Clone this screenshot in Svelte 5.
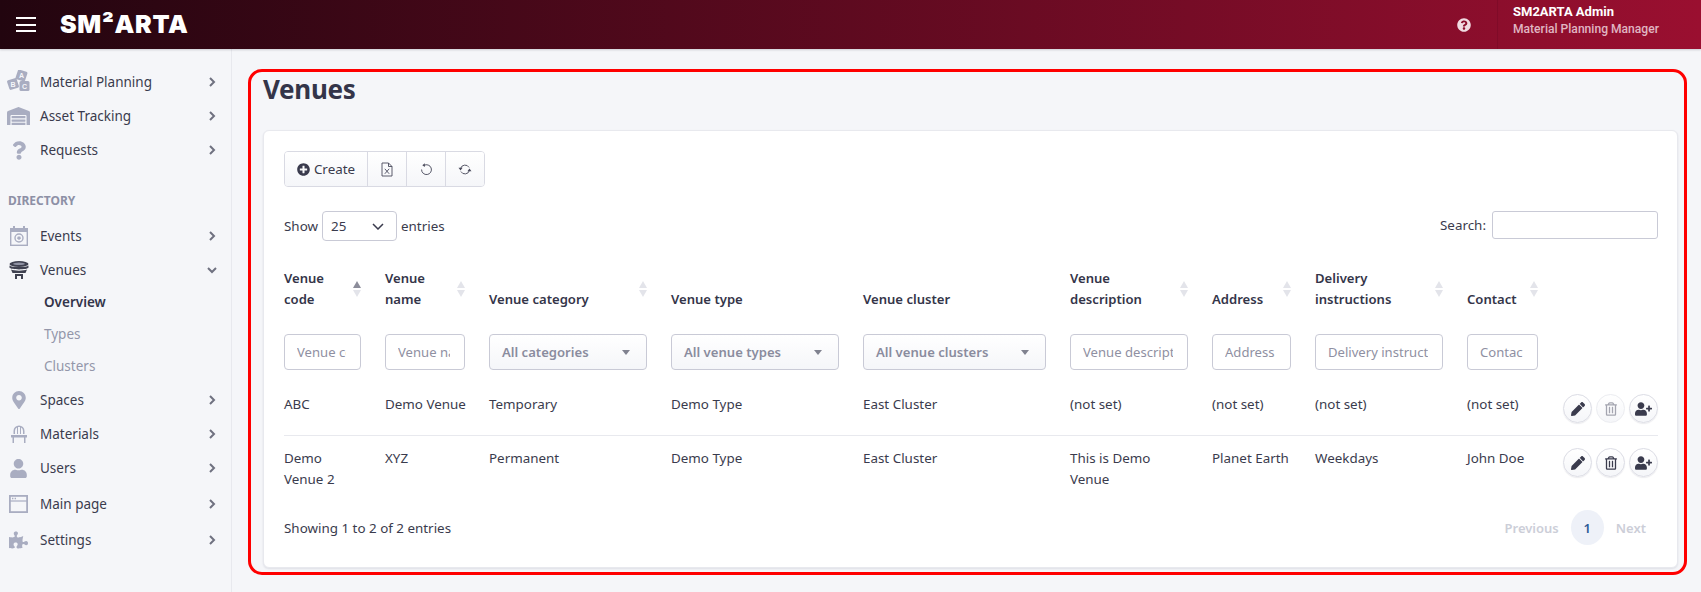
<script>
  const P = {
    plus: 'M256 8C119 8 8 119 8 256s111 248 248 248 248-111 248-248S393 8 256 8zm144 276c0 6.6-5.4 12-12 12h-92v92c0 6.6-5.4 12-12 12h-56c-6.6 0-12-5.4-12-12v-92h-92c-6.6 0-12-5.4-12-12v-56c0-6.6 5.4-12 12-12h92v-92c0-6.6 5.4-12 12-12h56c6.6 0 12 5.4 12 12v92h92c6.6 0 12 5.4 12 12v56z',
    help: 'M504 256c0 136.997-111.043 248-248 248S8 392.997 8 256C8 119.083 119.043 8 256 8s248 111.083 248 248zM262.655 90c-54.497 0-89.255 22.957-116.549 63.758-3.536 5.286-2.353 12.415 2.715 16.258l34.699 26.31c5.205 3.947 12.621 3.008 16.665-2.122 17.864-22.658 30.113-35.797 57.303-35.797 20.429 0 45.698 13.148 45.698 32.958 0 14.976-12.363 22.667-32.534 33.976C247.128 238.528 216 254.941 216 296v4c0 6.627 5.373 12 12 12h56c6.627 0 12-5.373 12-12v-1.333c0-28.462 83.186-29.647 83.186-106.667 0-58.002-60.165-102-116.531-102zM256 338c-25.365 0-46 20.635-46 46 0 25.364 20.635 46 46 46s46-20.636 46-46c0-25.365-20.635-46-46-46z',
    pencil: 'M497.9 142.1l-46.1 46.1c-4.7 4.7-12.3 4.7-17 0l-111-111c-4.7-4.7-4.7-12.3 0-17l46.1-46.1c18.7-18.7 49.1-18.7 67.9 0l60.1 60.1c18.8 18.7 18.8 49.1 0 67.9zM284.2 99.8L21.6 362.4.4 483.9c-2.9 16.4 11.4 30.6 27.8 27.8l121.5-21.3 262.6-262.6c4.7-4.7 4.7-12.3 0-17l-111-111c-4.8-4.7-12.4-4.7-17.1 0z',
    trash: 'M268 416h24a12 12 0 0 0 12-12V188a12 12 0 0 0-12-12h-24a12 12 0 0 0-12 12v216a12 12 0 0 0 12 12zM432 80h-82.41l-34-56.7A48 48 0 0 0 274.41 0H173.59a48 48 0 0 0-41.16 23.3L98.41 80H16A16 16 0 0 0 0 96v16a16 16 0 0 0 16 16h16v336a48 48 0 0 0 48 48h288a48 48 0 0 0 48-48V128h16a16 16 0 0 0 16-16V96a16 16 0 0 0-16-16zM171.84 50.91A6 6 0 0 1 177 48h94a6 6 0 0 1 5.15 2.91L293.61 80H154.39zM368 464H80V128h288zm-212-48h24a12 12 0 0 0 12-12V188a12 12 0 0 0-12-12h-24a12 12 0 0 0-12 12v216a12 12 0 0 0 12 12z',
    userplus: 'M624 208h-64v-64c0-8.8-7.2-16-16-16h-32c-8.8 0-16 7.2-16 16v64h-64c-8.8 0-16 7.2-16 16v32c0 8.8 7.2 16 16 16h64v64c0 8.8 7.2 16 16 16h32c8.8 0 16-7.2 16-16v-64h64c8.8 0 16-7.2 16-16v-32c0-8.8-7.2-16-16-16zm-400 48c70.7 0 128-57.3 128-128S294.7 0 224 0 96 57.3 96 128s57.3 128 128 128zm89.6 32h-16.7c-22.2 10.2-46.9 16-72.9 16s-50.6-5.8-72.9-16h-16.7C60.2 288 0 348.2 0 422.4V464c0 26.5 21.5 48 48 48h352c26.5 0 48-21.5 48-48v-41.6c0-74.2-60.2-134.4-134.4-134.4z',
    user: 'M224 256c70.7 0 128-57.3 128-128S294.7 0 224 0 96 57.3 96 128s57.3 128 128 128zm89.6 32h-16.7c-22.2 10.2-46.9 16-72.9 16s-50.6-5.8-72.9-16h-16.7C60.2 288 0 348.2 0 422.4V464c0 26.5 21.5 48 48 48h352c26.5 0 48-21.5 48-48v-41.6c0-74.2-60.2-134.4-134.4-134.4z',
    question: 'M202.021 0C122.202 0 70.503 32.703 29.914 91.026c-7.363 10.58-5.093 25.086 5.178 32.874l43.138 32.709c10.373 7.865 25.132 6.026 33.253-4.148 25.049-31.381 43.63-49.449 82.757-49.449 30.764 0 68.816 19.799 68.816 49.631 0 22.552-18.617 34.134-48.993 51.164-35.423 19.86-82.299 44.576-82.299 106.405V320c0 13.255 10.745 24 24 24h72.471c13.255 0 24-10.745 24-24v-5.773c0-42.86 125.268-44.645 125.268-160.627C377.504 66.256 286.902 0 202.021 0zM192 373.459c-38.196 0-69.271 31.075-69.271 69.271 0 38.195 31.075 69.27 69.271 69.27s69.271-31.075 69.271-69.271-31.075-69.27-69.271-69.27z',
    marker: 'M172.268 501.67C26.97 291.031 0 269.413 0 192 0 85.961 85.961 0 192 0s192 85.961 192 192c0 77.413-26.97 99.031-172.268 309.67-9.535 13.774-29.93 13.773-39.464 0zM192 272c44.183 0 80-35.817 80-80s-35.817-80-80-80-80 35.817-80 80 35.817 80 80 80z',
    puzzle: 'M519.442 288.651c-41.519 0-59.5 31.593-82.058 31.593C377.409 320.244 432 144 432 144s-196.288 80-196.288-3.297c0-35.827 36.288-46.25 36.288-85.985C272 19.216 243.885 0 210.539 0c-34.654 0-66.366 18.891-66.366 56.346 0 41.364 31.711 59.277 31.711 81.75C175.885 207.719 0 166.758 0 166.758v333.237s178.635 41.047 178.635-28.662c0-22.473-40-40.107-40-81.471 0-37.456 29.25-56.346 63.577-56.346 33.673 0 61.788 19.216 61.788 54.717 0 39.735-36.288 50.158-36.288 85.985 0 60.803 129.675 25.73 181.23 25.73 0 0-34.725-120.101 25.827-120.101 35.962 0 46.423 36.152 86.308 36.152C556.712 416 576 387.99 576 354.443c0-34.199-18.962-65.792-56.558-65.792z',
    warehouse: 'M504 352H136.4c-4.4 0-8 3.6-8 8l-.1 48c0 4.4 3.6 8 8 8H504c4.4 0 8-3.6 8-8v-48c0-4.4-3.6-8-8-8zm0 96H136.1c-4.4 0-8 3.6-8 8l-.1 48c0 4.4 3.6 8 8 8h368c4.4 0 8-3.6 8-8v-48c0-4.4-3.6-8-8-8zm0-192H136.6c-4.4 0-8 3.6-8 8l-.1 48c0 4.4 3.6 8 8 8H504c4.4 0 8-3.6 8-8v-48c0-4.4-3.6-8-8-8zm106.5-139L338.4 3.7a48.15 48.15 0 0 0-36.9 0L29.5 117C11.7 124.5 0 141.9 0 161.3V504c0 4.4 3.6 8 8 8h80c4.4 0 8-3.6 8-8V256c0-17.6 14.6-32 32.6-32h382.8c18 0 32.6 14.4 32.6 32v248c0 4.4 3.6 8 8 8h80c4.4 0 8-3.6 8-8V161.3c0-19.4-11.7-36.8-29.5-44.3z'
  };

  const cols = [
    { label: ['Venue', 'code'], w: 89, ph: 'Venue code', sort: 'asc' },
    { label: ['Venue', 'name'], w: 104, ph: 'Venue name', sort: 'both' },
    { label: ['Venue category'], w: 182, sel: 'All categories', sort: 'both' },
    { label: ['Venue type'], w: 192, sel: 'All venue types' },
    { label: ['Venue cluster'], w: 207, sel: 'All venue clusters' },
    { label: ['Venue', 'description'], w: 142, ph: 'Venue description', sort: 'both' },
    { label: ['Address'], w: 103, ph: 'Address', sort: 'both' },
    { label: ['Delivery', 'instructions'], w: 152, ph: 'Delivery instructions', sort: 'both' },
    { label: ['Contact'], w: 95, ph: 'Contact', sort: 'both' },
    { label: [], w: 108 }
  ];

  const rows = [
    { cells: ['ABC', 'Demo Venue', 'Temporary', 'Demo Type', 'East Cluster', '(not set)', '(not set)', '(not set)', '(not set)'], noDelete: true },
    { cells: ['Demo Venue 2', 'XYZ', 'Permanent', 'Demo Type', 'East Cluster', 'This is Demo Venue', 'Planet Earth', 'Weekdays', 'John Doe'], noDelete: false }
  ];
</script>

<div class="page">
  <header class="topbar">
    <button class="burger" aria-label="Menu"><i></i><i></i><i></i></button>
    <div class="logo">SM²ARTA</div>
    <div class="spacer"></div>
    <svg class="help" viewBox="0 0 512 512"><path d={P.help} /></svg>
    <div class="who">
      <div class="who-name">SM2ARTA Admin</div>
      <div class="who-role">Material Planning Manager</div>
    </div>
  </header>

  <div class="body">
    <aside class="side">
      {#snippet chev(open = false)}
        <svg class="chev" viewBox="0 0 10 10">
          {#if open}<path d="M1 3l4 4 4-4" />{:else}<path d="M3 1l4 4-4 4" />{/if}
        </svg>
      {/snippet}

      <a class="item"><span class="ic">
        <svg width="24" height="24" viewBox="0 0 24 24"><g fill="#a9adc1">
          <rect x="9.5" y="0.5" width="10" height="10" rx="1.5" transform="rotate(18 14.5 5.5)" />
          <rect x="1" y="9" width="10" height="10" rx="1.5" transform="rotate(-18 6 14)" />
          <rect x="12.500" y="11" width="10" height="10" rx="1.5" />
        </g><g fill="#f5f6f9" font-size="7" font-family="Liberation Sans, sans-serif" font-weight="700" text-anchor="middle">
          <text x="14.500" y="8">A</text><text x="6" y="16.500">B</text><text x="17.500" y="18.500">C</text>
        </g></svg>
      </span><span class="tx">Material Planning</span>{@render chev()}</a>

      <a class="item"><span class="ic"><svg width="23" height="18" viewBox="0 0 640 512" preserveAspectRatio="none"><path fill="#a9adc1" d={P.warehouse} /></svg></span><span class="tx">Asset Tracking</span>{@render chev()}</a>

      <a class="item"><span class="ic"><svg width="14" height="19" viewBox="0 0 384 512"><path fill="#a9adc1" d={P.question} /></svg></span><span class="tx">Requests</span>{@render chev()}</a>

      <div class="section">DIRECTORY</div>

      <a class="item"><span class="ic">
        <svg width="18" height="20" viewBox="0 0 18 20"><g fill="none" stroke="#a9adc1" stroke-width="1.400">
          <rect x="0.700" y="2.700" width="16.600" height="16.600" />
          <circle cx="9" cy="12" r="4" />
        </g><path fill="#a9adc1" d="M0 2h18v4H0zM3 0h2v3H3zM13 0h2v3h-2zM7.800 10.500h2.400l.8 2-2 1.500-2-1.500z" /></svg>
      </span><span class="tx">Events</span>{@render chev()}</a>

      <a class="item"><span class="ic">
        <svg width="20" height="18" viewBox="0 0 20 18"><g fill="#3f4150">
          <ellipse cx="10" cy="3" rx="9.500" ry="3" />
          <path d="M.5 4.500c2 2 17 2 19 0v2c-1 2.500-18 2.500-19 0zM2 8.500c3 1.500 13 1.500 16 0l-1.500 3.500h-13zM6 13h8v5h-2v-3H8v3H6z" />
        </g><ellipse cx="10" cy="2.800" rx="6" ry="1.300" fill="#8f92a3" /></svg>
      </span><span class="tx">Venues</span>{@render chev(true)}</a>

      <div class="subs">
        <a class="sub on">Overview</a>
        <a class="sub">Types</a>
        <a class="sub">Clusters</a>
      </div>

      <a class="item"><span class="ic"><svg width="14" height="18" viewBox="0 0 384 512"><path fill="#a9adc1" d={P.marker} /></svg></span><span class="tx">Spaces</span>{@render chev()}</a>

      <a class="item"><span class="ic">
        <svg width="16" height="18" viewBox="0 0 16 18"><g fill="#a9adc1">
          <path d="M2.500 9V6a5.500 5.500 0 0 1 11 0v3h-1.500V6q0-2.700-2-3.600V9H9V2.100H7V9H6V2.400Q4 3.300 4 6v3z" />
          <path d="M0 10h16v2.500H0zM1.500 12.500H3V18H1.500zM13 12.500h1.500V18H13z" />
        </g></svg>
      </span><span class="tx">Materials</span>{@render chev()}</a>

      <a class="item"><span class="ic"><svg width="17" height="19" viewBox="0 0 448 512"><path fill="#a9adc1" d={P.user} /></svg></span><span class="tx">Users</span>{@render chev()}</a>

      <a class="item tall first"><span class="ic">
        <svg width="19" height="18" viewBox="0 0 19 18"><g fill="none" stroke="#a9adc1" stroke-width="1.800"><rect x="0.900" y="0.900" width="17.200" height="16.200" /><path d="M1 6h17" stroke-width="1.200" /></g><path fill="#a9adc1" d="M3 2.800h1.400v1.400H3zM5.600 2.800H7v1.400H5.600z" /></svg>
      </span><span class="tx">Main page</span>{@render chev()}</a>

      <a class="item tall"><span class="ic"><svg width="19" height="18" viewBox="0 0 576 512"><path fill="#a9adc1" d={P.puzzle} /></svg></span><span class="tx">Settings</span>{@render chev()}</a>
    </aside>

    <main class="main">
      <section class="frame">
        <h1>Venues</h1>
        <div class="card">
          <div class="tools">
            <button class="tool create"><svg width="13" height="13" viewBox="0 0 512 512"><path fill="#3a3b4d" d={P.plus} /></svg>Create</button>
            <button class="tool" aria-label="Export">
              <svg width="12" height="15" viewBox="0 0 12 15" fill="none" stroke="#4a4b5c" stroke-width="0.900"><path d="M1 1h6.500L11 4.500V14H1zM7.500 1v3.500H11" /><path d="M3.800 6.800l4.400 5M8.200 6.800l-4.400 5" /></svg>
            </button>
            <button class="tool" aria-label="Reset">
              <svg width="13" height="13" viewBox="0 0 14 14" fill="none" stroke="#4a4b5c" stroke-width="1"><path d="M4.300 2.600A5.300 5.300 0 1 1 1.700 7" /><path fill="#4a4b5c" stroke="none" d="M5.200 .3v4L2.500 2.300z" /></svg>
            </button>
            <button class="tool" aria-label="Refresh">
              <svg width="14" height="13" viewBox="0 0 14 14" fill="none" stroke="#4a4b5c" stroke-width="1"><path d="M2.200 6A5 5 0 0 1 11.400 4.800M11.800 8A5 5 0 0 1 2.600 9.200" /><path fill="#4a4b5c" stroke="none" d="M0 5.200h4.400L2.200 8zM14 8.800H9.600L11.800 6z" /></svg>
            </button>
          </div>

          <div class="controls">
            <div class="show">
              <span>Show</span>
              <div class="len"><span>25</span><svg width="12" height="7" viewBox="0 0 12 7" fill="none" stroke="#3a3b4d" stroke-width="1.500"><path d="M1 1l5 5 5-5" /></svg></div>
              <span>entries</span>
            </div>
            <label class="search"><span>Search:</span><input type="text" /></label>
          </div>

          <table>
            <colgroup>
              {#each cols as c}<col style="width:{c.w}px" />{/each}
            </colgroup>
            <thead>
              <tr>
                {#each cols as c}
                  <th>
                    <div class="th">
                      <span class="th-label">{#each c.label as l}<span>{l}</span>{/each}</span>
                      {#if c.sort}
                        <span class="sort"><i class="up" class:dark={c.sort === 'asc'}></i><i class="down"></i></span>
                      {/if}
                    </div>
                  </th>
                {/each}
              </tr>
              <tr class="filters">
                {#each cols as c}
                  <th>
                    {#if c.ph}<input class="f" type="text" placeholder={c.ph} />{/if}
                    {#if c.sel}<div class="fsel"><span>{c.sel}</span><i></i></div>{/if}
                  </th>
                {/each}
              </tr>
            </thead>
            <tbody>
              {#each rows as r}
                <tr>
                  {#each r.cells as cell}<td class:nw={cell === 'Demo Venue'}>{cell}</td>{/each}
                  <td class="acts">
                    <div class="acts-in">
                      <button class="rnd" aria-label="Edit"><svg width="14" height="14" viewBox="0 0 512 512"><path d={P.pencil} /></svg></button>
                      <button class="rnd" class:off={r.noDelete} aria-label="Delete"><svg width="12" height="14" viewBox="0 0 448 512"><path d={P.trash} /></svg></button>
                      <button class="rnd" aria-label="Assign"><svg width="17" height="14" viewBox="0 0 640 512"><path d={P.userplus} /></svg></button>
                    </div>
                  </td>
                </tr>
              {/each}
            </tbody>
          </table>

          <div class="foot">
            <span>Showing 1 to 2 of 2 entries</span>
            <nav class="pager">
              <span class="pg">Previous</span>
              <span class="cur">1</span>
              <span class="pg">Next</span>
            </nav>
          </div>
        </div>
      </section>
    </main>
  </div>
</div>

<style>
  :global(body) {
    margin: 0;
    background: #f5f6f9;
    font-family: "Noto Sans", "Open Sans", sans-serif;
    font-size: 13.4px;
    color: #3a3b4d;
  }
  .page { width: 1701px; height: 592px; overflow: hidden; display: flex; flex-direction: column; }
  .topbar {
    height: 49px; flex: none; display: flex; align-items: center;
    background: linear-gradient(90deg, #22050f 0%, #9a0f30 100%);
    box-shadow: 0 1px 2px rgba(40, 40, 60, .2);
    position: relative;
  }
  .burger { width: 20px; height: 15px; margin-left: 16px; padding: 0; border: 0; background: none; display: flex; flex-direction: column; justify-content: space-between; }
  .burger i { display: block; height: 2px; background: #fff; }
  .logo { margin-left: 24px; font-family: Inter, sans-serif; font-weight: 900; font-size: 25px; letter-spacing: .7px; color: #fff; line-height: 1; }
  .spacer { flex: 1; }
  .help { width: 14px; height: 14px; fill: #f0dbe1; margin-right: 26px; }
  .who { height: 49px; width: 204px; box-sizing: border-box; padding: 4px 0 0 15px; border-left: 1px solid rgba(60, 0, 20, .15); line-height: 16.500px; font-family: Roboto, sans-serif; }
  .who-name { color: #fff; font-weight: 700; font-size: 13px; }
  .who-role { color: #e0b6c2; font-weight: 500; font-size: 12.100px; }

  .body { flex: 1; display: flex; min-height: 0; }
  .side { width: 232px; flex: none; box-sizing: border-box; padding-top: 16px; border-right: 1px solid #e8e9ee; }
  .item { height: 34px; display: flex; align-items: center; color: #3a3b4d; font-size: 13.5px; }
  .item.tall { height: 36px; }
  .item.tall.first { margin-top: 1px; }
  .ic { width: 40px; flex: none; display: flex; justify-content: center; padding-right: 3px; box-sizing: border-box; }
  .tx { flex: 1; }
  .chev { width: 10px; height: 10px; margin-right: 14px; fill: none; stroke: #6f7180; stroke-width: 2; }
  .section { height: 52px; box-sizing: border-box; padding: 25px 0 9px 8px; line-height: 18px; font-size: 12px; font-weight: 700; color: #8d90a6; }
  .subs { display: flex; flex-direction: column; padding-bottom: 1px; margin-top: -1px; }
  .sub { height: 32px; line-height: 32px; padding-left: 44px; color: #9396aa; font-size: 13.5px; }
  .sub.on { color: #33344a; font-weight: 600; }

  .main { flex: 1; min-width: 0; padding: 20px 14px 0 16px; }
  .frame { box-sizing: border-box; height: 506px; border: 3px solid #f00; border-radius: 14px; padding: 0 6px 4px 12px; display: flex; flex-direction: column; }
  h1 { margin: 0 0 24px; font-size: 26px; line-height: 34px; font-weight: 700; letter-spacing: -.3px; color: #343549; }
  .card { flex: 1; box-sizing: border-box; background: #fff; border: 1px solid #e8e9ee; border-radius: 6px; padding: 20px 19px 21px 20px; box-shadow: 0 1px 2px rgba(60, 60, 90, .12); }

  .tools { display: inline-flex; height: 36px; vertical-align: top; border: 1px solid #d9dae3; border-radius: 4px; box-sizing: border-box; overflow: hidden; }
  .tool { height: 100%; width: 39px; padding: 0; border: 0; border-left: 1px solid #d9dae3; background: linear-gradient(180deg, #fff, #f5f6f9); display: flex; align-items: center; justify-content: center; font: inherit; color: #3a3b4d; }
  .tool.create { width: 82px; border-left: 0; gap: 4px; }

  .controls { display: flex; justify-content: space-between; align-items: flex-start; margin-top: 24px; height: 30px; }
  .show { display: flex; align-items: center; gap: 4px; }
  .len { width: 75px; height: 30px; box-sizing: border-box; border: 1px solid #c9cad6; border-radius: 4px; display: flex; align-items: center; justify-content: space-between; padding: 0 12px 0 8px; }
  .search { display: flex; align-items: center; gap: 6px; }
  .search input { width: 166px; height: 28px; box-sizing: border-box; border: 1px solid #c9cad6; border-radius: 3px; background: #fff; outline: none; }

  table { width: 1374px; table-layout: fixed; border-collapse: collapse; margin-top: 27px; }
  th, td { padding: 0 12px; text-align: left; vertical-align: bottom; }
  th:first-child, td:first-child { padding-left: 0; }
  th:last-child, td:last-child { padding-right: 0; }
  .th { display: flex; height: 42px; justify-content: space-between; line-height: 21px; font-weight: 600; color: #343549; font-size: 13.1px; }
  .th-label { display: flex; flex-direction: column; justify-content: flex-end; white-space: nowrap; }
  .sort { align-self: center; display: flex; flex-direction: column; gap: 2px; margin-right: 0; }
  .sort i { display: block; width: 0; height: 0; border-left: 4px solid transparent; border-right: 4px solid transparent; }
  .sort .up { border-bottom: 7px solid #e3e4ea; }
  .sort .up.dark { border-bottom-color: #8c8d9a; }
  .sort .down { border-top: 7px solid #e3e4ea; }
  .filters th { padding-top: 24px; padding-bottom: 12px; }
  .f { width: 100%; height: 36px; box-sizing: border-box; padding: 0 14px 0 12px; border: 1px solid #c9cad6; border-radius: 4px; background: #fff; font: inherit; font-size: 13.1px; font-weight: 400; outline: none; }
  .f::placeholder { color: #8f90a2; opacity: 1; }
  .fsel { height: 36px; box-sizing: border-box; padding: 0 12px; border: 1px solid #c9cad6; border-radius: 4px; background: linear-gradient(180deg, #fff, #f5f6f9); display: flex; align-items: center; justify-content: space-between; color: #8a8c9e; font-weight: 600; font-size: 13.1px; }
  .fsel i { width: 0; height: 0; margin-right: 4px; border-left: 4px solid transparent; border-right: 4px solid transparent; border-top: 5px solid #80828f; }
  tbody td { padding-top: 12px; padding-bottom: 12px; vertical-align: top; line-height: 21px; color: #3a3b4d; }
  tbody td.nw { white-space: nowrap; }
  tbody tr:first-child td { border-bottom: 1px solid #e8e9ee; }
  .acts-in { display: flex; justify-content: flex-end; gap: 4px; }
  .rnd { width: 29px; height: 29px; padding: 0; border: 1px solid #dcdde5; border-radius: 50%; background: linear-gradient(180deg, #fff, #f5f6f9); display: flex; align-items: center; justify-content: center; box-shadow: 0 1px 1px rgba(60, 60, 90, .1); }
  .rnd svg { fill: #3a3b4d; }
  .rnd.off { box-shadow: none; border-color: #ecedf1; }
  .rnd.off svg { fill: #a4a5b0; }

  .foot { display: flex; justify-content: space-between; align-items: center; margin-top: 8px; height: 35px; }
  .pager { display: flex; align-items: center; gap: 12px; padding-right: 12px; font-weight: 600; font-size: 13px; }
  .pg { color: #ccced8; }
  .cur { width: 33px; height: 35px; border-radius: 50%; background: #eef1f8; color: #2f5b97; display: flex; align-items: center; justify-content: center; }
</style>
